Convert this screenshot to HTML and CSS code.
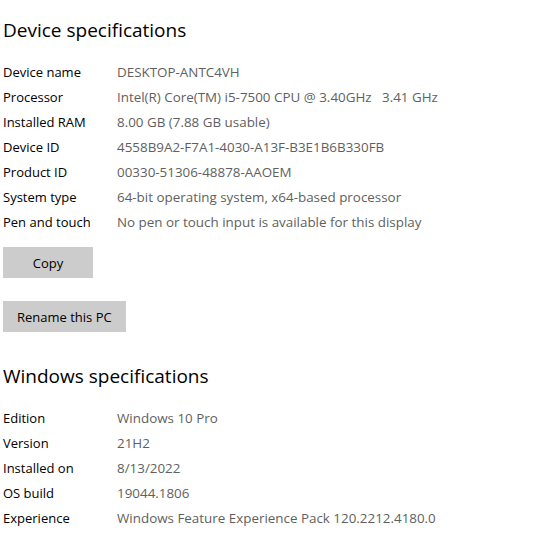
FILE: index.html
```html
<!DOCTYPE html>
<html>
<head>
<meta charset="utf-8">
<link rel="stylesheet" href="styles.css">
</head>
<body>
<div class="page">
  <h2 class="title">Device specifications</h2>
  <div class="specs">
    <div class="label">Device name</div><div class="value">DESKTOP-ANTC4VH</div>
    <div class="label">Processor</div><div class="value">Intel(R) Core(TM) i5-7500 CPU @ 3.40GHz&nbsp;&nbsp;&nbsp;3.41 GHz</div>
    <div class="label">Installed RAM</div><div class="value">8.00 GB (7.88 GB usable)</div>
    <div class="label">Device ID</div><div class="value">4558B9A2-F7A1-4030-A13F-B3E1B6B330FB</div>
    <div class="label">Product ID</div><div class="value">00330-51306-48878-AAOEM</div>
    <div class="label">System type</div><div class="value">64-bit operating system, x64-based processor</div>
    <div class="label">Pen and touch</div><div class="value">No pen or touch input is available for this display</div>
  </div>
  <div class="buttons">
    <button class="btn btn-copy">Copy</button>
    <button class="btn">Rename this PC</button>
  </div>
  <h2 class="title title-win">Windows specifications</h2>
  <div class="specs">
    <div class="label">Edition</div><div class="value">Windows 10 Pro</div>
    <div class="label">Version</div><div class="value">21H2</div>
    <div class="label">Installed on</div><div class="value">8/13/2022</div>
    <div class="label">OS build</div><div class="value">19044.1806</div>
    <div class="label">Experience</div><div class="value">Windows Feature Experience Pack 120.2212.4180.0</div>
  </div>
</div>
</body>
</html>
```
FILE: styles.css
```css
html, body {
  margin: 0;
  padding: 0;
  background: #ffffff;
}
.page {
  padding: 0 0 0 3px;
  font-family: "Open Sans", "Noto Sans", "Liberation Sans", sans-serif;
  color: #000;
}
.title {
  margin: 0;
  font-weight: 400;
  font-size: 19px;
  line-height: 28px;
  padding-top: 16px;
  height: 44px;
  box-sizing: border-box;
}
.specs {
  display: grid;
  grid-template-columns: 114px auto;
  grid-auto-rows: 25px;
  font-size: 13px;
  line-height: 25px;
  margin-top: 16px;
}
.label {
  color: #000;
}
.value {
  color: #5f5f5f;
  font-size: 13.4px;
}
.buttons {
  display: flex;
  flex-direction: column;
  align-items: flex-start;
  gap: 23px;
  margin-top: 12px;
}
.btn {
  font-family: inherit;
  font-size: 13px;
  border: none;
  background: #cccccc;
  color: #000;
  height: 31px;
  padding: 0 14px;
  margin: 0;
}
.btn-copy {
  width: 90px;
}
.title-win {
  margin-top: 14px;
}
```
